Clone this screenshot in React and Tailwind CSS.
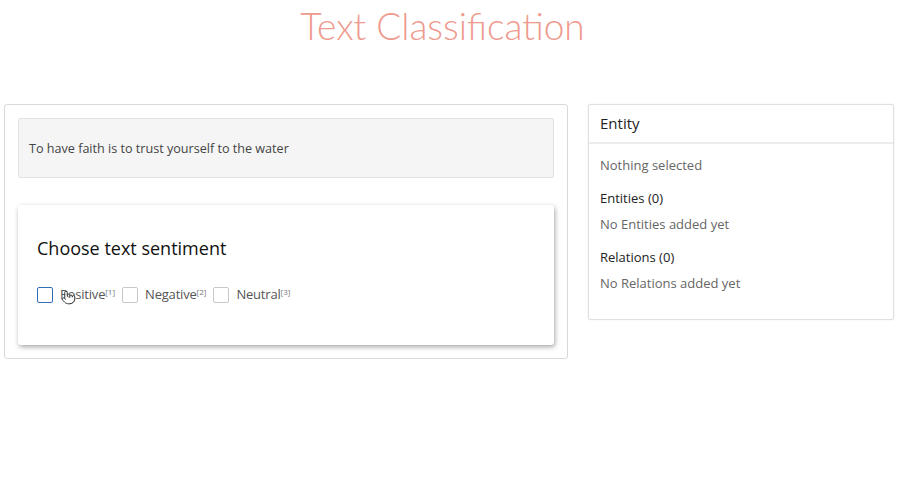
import { Pointer } from "lucide-react";

const options = [
  { label: "Positive", key: 1, active: true },
  { label: "Negative", key: 2 },
  { label: "Neutral", key: 3 },
];

export default function App() {
  return (
    <div className="min-h-[500px] w-[900px] bg-white font-['Open_Sans',sans-serif] text-[#333]">
      <h1 className="pr-[15px] pt-[5px] text-center font-['Lato',sans-serif] text-[37px] font-light leading-[42px] text-[#ee9a8e]">
        Text Classification
      </h1>
      <div className="mt-[57px] flex items-start gap-[20px] pl-[4px]">
        <div className="w-[564px] rounded-[3px] border border-[#d9d9d9] p-[13px]">
          <div className="h-[60px] rounded-[2px] border border-[#e3e3e3] bg-[#f5f5f5] px-[10px] pt-[21px] text-[12.6px] text-[#444]">
            To have faith is to trust yourself to the water
          </div>
          <div className="mt-[27px] h-[140px] rounded-[3px] bg-white px-[19px] pt-[31px] shadow-[1px_2px_5px_rgba(0,0,0,0.35)]">
            <h2 className="text-[18px] leading-[24px] text-[#111]">Choose text sentiment</h2>
            <div className="mt-[25px] flex items-center gap-[7px] text-[13px] text-[#555]">
              {options.map((o) => (
                <label key={o.key} className="relative flex items-center gap-[7px]">
                  <span
                    className={`h-[16px] w-[16px] rounded-[2px] border ${o.active ? "border-[1.5px] border-[#2f6fb8]" : "border-[#c8c8c8]"}`}
                  />
                  <span className="tracking-[-0.2px]">
                    {o.label}
                    <sup className="text-[8px] tracking-normal text-[#777]">[{o.key}]</sup>
                  </span>
                  {o.active && (
                    <Pointer size={15} strokeWidth={1.6} className="absolute left-[24px] top-[5px] text-[#333]" fill="white" />
                  )}
                </label>
              ))}
            </div>
          </div>
        </div>
        <div className="w-[306px] rounded-[2px] border border-[#e0e0e0] shadow-[0_0_2px_rgba(0,0,0,0.08)]">
          <div className="flex h-[39px] items-center border-b-2 border-[#ececec] px-[11px] text-[15px] text-[#222]">
            Entity
          </div>
          <div className="px-[11px] pb-[25px] pt-[12px] text-[13px]">
            <p className="text-[#666]">Nothing selected</p>
            <p className="mt-[13px] text-[#222]">Entities (0)</p>
            <p className="mt-[7px] text-[#666]">No Entities added yet</p>
            <p className="mt-[13px] text-[#222]">Relations (0)</p>
            <p className="mt-[7px] text-[#666]">No Relations added yet</p>
          </div>
        </div>
      </div>
    </div>
  );
}
